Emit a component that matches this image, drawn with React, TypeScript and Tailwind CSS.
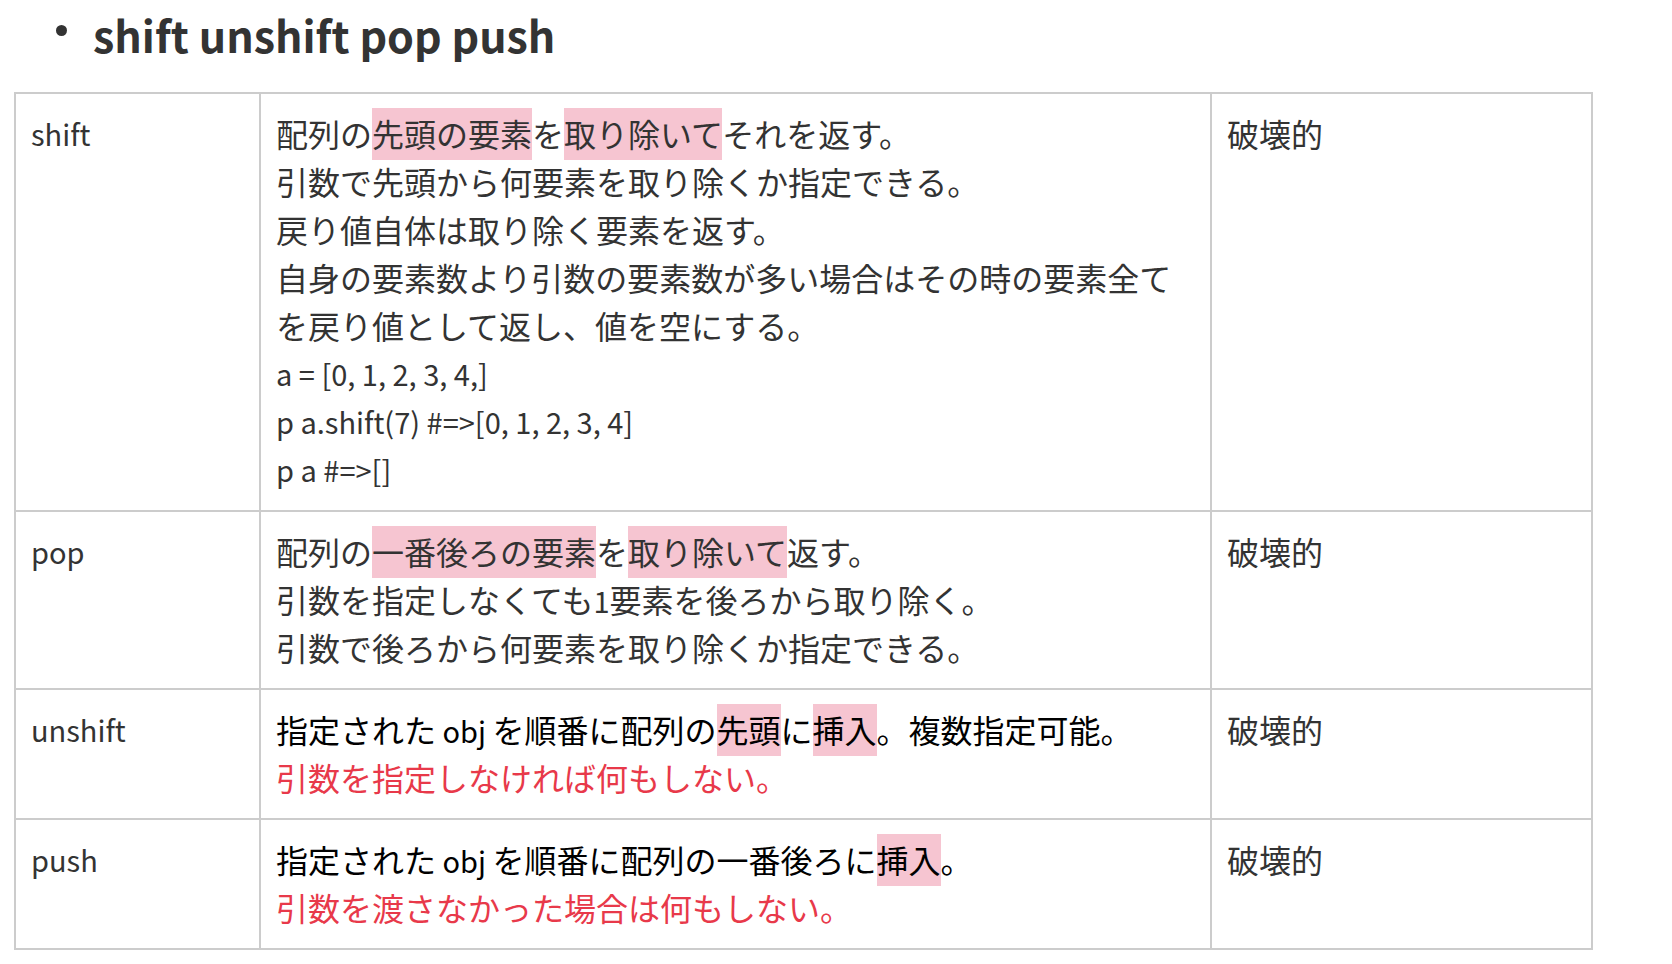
import React from "react";

const H = ({ children }: { children: React.ReactNode }) => (
  <span className="bg-[#f6c5d1] pt-[2px] pb-[4px]">{children}</span>
);

const L = ({ children }: { children: React.ReactNode }) => (
  <span className="text-[29px] leading-[30px]">{children}</span>
);

export default function App() {
  const cell = "border-2 border-[#cccccc] align-top pl-[15px] pr-[17px] pt-[15px] pb-[17px]";
  return (
    <div
      className="w-[1672px] h-[964px] bg-white text-[#333333] overflow-hidden"
      style={{ fontFamily: '"Noto Sans CJK JP", "Noto Sans", sans-serif' }}
    >
      <div className="flex items-start h-[92px] pl-[56px] pt-[4px]">
        <span className="mt-[21px] w-[11px] h-[11px] rounded-full bg-[#333333]"></span>
        <h2 className="ml-[26px] text-[43px] leading-[60px] font-bold">shift unshift pop push</h2>
      </div>
      <table className="ml-[14px] border-collapse table-fixed text-[32px] leading-[48px] w-[1577px]">
        <colgroup>
          <col className="w-[245px]" />
          <col className="w-[951px]" />
          <col className="w-[381px]" />
        </colgroup>
        <tbody>
          <tr>
            <td className={`${cell} text-[29px]`}>shift</td>
            <td className={cell}>
              <div>
                配列の<H>先頭の要素</H>を<H>取り除いて</H>それを返す。
              </div>
              <div>引数で先頭から何要素を取り除くか指定できる。</div>
              <div>戻り値自体は取り除く要素を返す。</div>
              <div>自身の要素数より引数の要素数が多い場合はその時の要素全てを戻り値として返し、値を空にする。</div>
              <div className="text-[29px]">a = [0, 1, 2, 3, 4,]</div>
              <div className="text-[29px]">p a.shift(7) #=&gt;[0, 1, 2, 3, 4]</div>
              <div className="text-[29px]">p a #=&gt;[]</div>
            </td>
            <td className={cell}>破壊的</td>
          </tr>
          <tr>
            <td className={`${cell} text-[29px]`}>pop</td>
            <td className={cell}>
              <div>
                配列の<H>一番後ろの要素</H>を<H>取り除いて</H>返す。
              </div>
              <div>引数を指定しなくても<L>1</L>要素を後ろから取り除く。</div>
              <div>引数で後ろから何要素を取り除くか指定できる。</div>
            </td>
            <td className={cell}>破壊的</td>
          </tr>
          <tr>
            <td className={`${cell} text-[29px]`}>unshift</td>
            <td className={cell}>
              <div className="text-black">
                指定された<L> obj </L>を順番に配列の<H>先頭</H>に<H>挿入</H>。複数指定可能。
              </div>
              <div className="text-[#e8394a]">引数を指定しなければ何もしない。</div>
            </td>
            <td className={cell}>破壊的</td>
          </tr>
          <tr>
            <td className={`${cell} text-[29px]`}>push</td>
            <td className={cell}>
              <div className="text-black">
                指定された<L> obj </L>を順番に配列の一番後ろに<H>挿入</H>。
              </div>
              <div className="text-[#e8394a]">引数を渡さなかった場合は何もしない。</div>
            </td>
            <td className={cell}>破壊的</td>
          </tr>
        </tbody>
      </table>
    </div>
  );
}
